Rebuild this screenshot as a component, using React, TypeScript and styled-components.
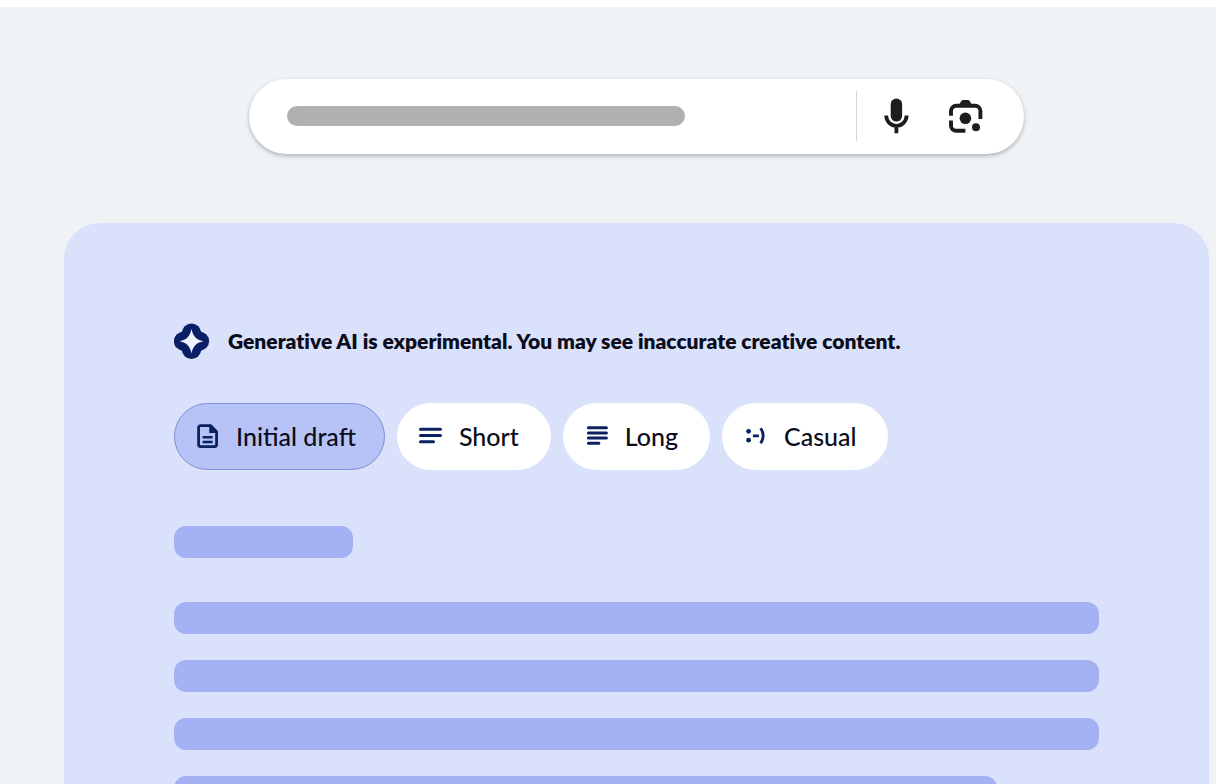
import React from "react";
import styled, { createGlobalStyle } from "styled-components";

const GlobalStyle = createGlobalStyle`
  *, *::before, *::after { box-sizing: border-box; }
  body {
    margin: 0;
    background: #ffffff;
    color: #0b0d1c;
    font-family: Lato, "Open Sans", sans-serif;
    font-variant-ligatures: none;
  }
`;

const Page = styled.main`
  display: flex;
  flex-direction: column;
  height: calc(100vh - 7px);
  margin-top: 7px;
  padding: 72px 7px 0 64px;
  overflow: hidden;
  background: #eff3f6;
`;

const SearchBar = styled.div`
  display: flex;
  align-items: center;
  flex: none;
  align-self: center;
  width: 100%;
  max-width: 775px;
  height: 75px;
  padding: 0 41px 2px 38px;
  border-radius: 38px;
  background: #ffffff;
  box-shadow: 0 2px 4px rgba(60, 64, 67, 0.36);
`;

const QueryLine = styled.div`
  flex: 0 1 398px;
  height: 20px;
  border-radius: 10px;
  background: #b0b0b0;
`;

const SearchActions = styled.div`
  display: flex;
  align-items: center;
  gap: 37px;
  height: 50px;
  margin-left: auto;
  padding-left: 25px;
  border-left: 1px solid #d4d6d9;
`;

const IconButton = styled.button`
  display: flex;
  padding: 0;
  border: 0;
  background: none;
  color: #1c1d21;
  cursor: pointer;
`;

const Panel = styled.section`
  display: flex;
  flex-direction: column;
  flex: 1 0 auto;
  margin-top: 69px;
  padding: 100px 110px 0;
  border-radius: 36px 36px 0 0;
  background: #dae1fb;
`;

const Notice = styled.div`
  display: flex;
  align-items: center;
  gap: 18px;
  height: 36px;
`;

const NoticeText = styled.p`
  margin: 0;
  font-size: 21px;
  line-height: 28px;
  font-weight: 800;
`;

const Chips = styled.div`
  display: flex;
  flex-wrap: wrap;
  gap: 12px;
  margin-top: 44px;
`;

const Chip = styled.button<{ $selected?: boolean }>`
  display: flex;
  align-items: center;
  gap: 16px;
  height: 67px;
  padding: 0 ${(p) => (p.$selected ? "28px" : "31px")} 1px 21px;
  border: 1px solid ${(p) => (p.$selected ? "#7f8fd8" : "#ffffff")};
  border-radius: 34px;
  background: ${(p) => (p.$selected ? "#b7c3f6" : "#ffffff")};
  color: inherit;
  font-family: inherit;
  font-size: 25px;
  font-weight: 500;
  line-height: 32px;
  cursor: pointer;

  svg { color: #0b2162; }
`;

const Draft = styled.div`
  display: flex;
  flex-direction: column;
  gap: 26px;
  margin-top: 56px;
`;

const Line = styled.div<{ $width?: string; $heading?: boolean }>`
  width: ${(p) => p.$width ?? "100%"};
  height: 32px;
  margin-bottom: ${(p) => (p.$heading ? "18px" : "0")};
  border-radius: 12px;
  background: #a4b2f4;
`;

const MicIcon = () => (
  <svg width="28" height="36" viewBox="0 0 28 36" fill="none" aria-hidden="true">
    <rect x="8.7" y="0.6" width="11.4" height="23" rx="5.7" fill="currentColor" />
    <path d="M4.2 17.600a10.200 10.200 0 0 0 20.400 0M14.400 28v7.300" stroke="currentColor" strokeWidth="3.800" />
  </svg>
);

const LensIcon = () => (
  <svg width="36" height="36" viewBox="0 0 36 36" fill="none" aria-hidden="true">
    <path
      d="M4 17.800V13a5.200 5.200 0 0 1 5.200-5.200h19a5.200 5.200 0 0 1 5.200 5.200v8M4 22.600v5a5.200 5.200 0 0 0 5.200 5.200h9.200"
      stroke="currentColor"
      strokeWidth="3.900"
    />
    <path d="M11 8.500l3-5q.8-1.400 2.200-1.400h4.600q1.400 0 2.200 1.400l3 5z" fill="currentColor" />
    <circle cx="18.400" cy="20.300" r="5.800" fill="currentColor" />
    <circle cx="29" cy="29.300" r="4" fill="currentColor" />
  </svg>
);

const GenerativeIcon = () => (
  <svg width="36" height="36" viewBox="0 0 36 36" aria-hidden="true">
    <g fill="#0a1f66">
      <circle cx="17.500" cy="10" r="9.600" />
      <circle cx="17.500" cy="26.400" r="9.600" />
      <circle cx="9.300" cy="18.200" r="9.400" />
      <circle cx="25.700" cy="18.200" r="9.400" />
      <rect x="7" y="7.700" width="21" height="21" rx="3" />
    </g>
    <path d="M17.500 6C19 13.400 22.300 16.700 29.300 18.200C22.300 19.700 19 23 17.500 30.400C16 23 12.700 19.700 5.700 18.200C12.700 16.700 16 13.400 17.500 6Z" fill="#eef3ff" />
  </svg>
);

const DraftIcon = () => (
  <svg width="24" height="24" viewBox="0 0 24 24" fill="none" stroke="currentColor" strokeWidth="2.800" aria-hidden="true">
    <path d="M14.500 1.600H4.600a2 2 0 0 0-2 2v17a2 2 0 0 0 2 2h14a2 2 0 0 0 2-2V7.700z" strokeLinejoin="round" />
    <path d="M14 2v6.200h6.500z" fill="currentColor" strokeWidth="1.500" />
    <path d="M6.600 13.200h10M6.600 18h10" strokeWidth="2.400" />
  </svg>
);

const ShortIcon = () => (
  <svg width="24" height="24" viewBox="0 0 24 24" fill="none" stroke="currentColor" strokeWidth="3" strokeLinecap="round" aria-hidden="true">
    <path d="M1.500 5.300h20M1.500 11.600h20M1.500 17.700h13" />
  </svg>
);

const LongIcon = () => (
  <svg width="24" height="24" viewBox="0 0 24 24" fill="none" stroke="currentColor" strokeWidth="3" strokeLinecap="round" aria-hidden="true">
    <path d="M3.400 3.800h18M3.400 9h18M3.400 14.100h18M3.400 19.300h10.500" />
  </svg>
);

const CasualIcon = () => (
  <svg width="24" height="24" viewBox="0 0 24 24" fill="none" stroke="currentColor" strokeWidth="2.800" aria-hidden="true">
    <circle cx="4.600" cy="7.300" r="2.400" fill="currentColor" stroke="none" />
    <circle cx="4.600" cy="16.200" r="2.400" fill="currentColor" stroke="none" />
    <path d="M8.900 11.800h6M16.600 4.300q5.200 7.400 0 14.900" />
  </svg>
);

const chips = [
  { label: "Initial draft", icon: <DraftIcon />, selected: true },
  { label: "Short", icon: <ShortIcon /> },
  { label: "Long", icon: <LongIcon /> },
  { label: "Casual", icon: <CasualIcon /> },
];

export default function App() {
  return (
    <>
      <GlobalStyle />
      <Page>
        <SearchBar role="search">
          <QueryLine />
          <SearchActions>
            <IconButton type="button" aria-label="Search by voice">
              <MicIcon />
            </IconButton>
            <IconButton type="button" aria-label="Search by image">
              <LensIcon />
            </IconButton>
          </SearchActions>
        </SearchBar>
        <Panel>
          <Notice>
            <GenerativeIcon />
            <NoticeText>
              Generative AI is experimental. You may see inaccurate creative content.
            </NoticeText>
          </Notice>
          <Chips>
            {chips.map(({ label, icon, selected }) => (
              <Chip key={label} type="button" $selected={selected} aria-pressed={!!selected}>
                {icon}
                {label}
              </Chip>
            ))}
          </Chips>
          <Draft>
            <Line $heading $width="179px" />
            <Line />
            <Line />
            <Line />
            <Line $width="89%" />
          </Draft>
        </Panel>
      </Page>
    </>
  );
}
